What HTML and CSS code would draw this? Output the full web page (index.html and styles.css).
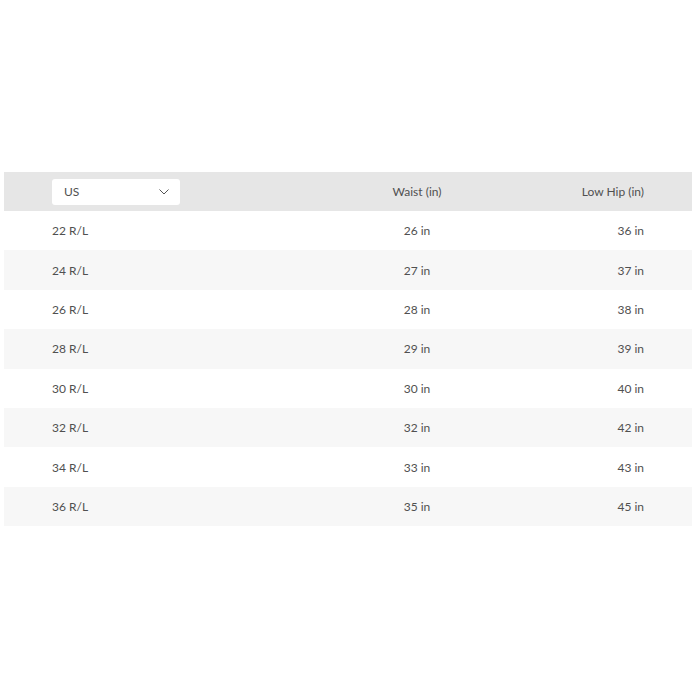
FILE: index.html
```html
<!DOCTYPE html>
<html>
<head>
<meta charset="utf-8">
<link rel="stylesheet" href="styles.css">
</head>
<body>
<div class="page">
  <div class="table">
    <div class="row head">
      <div class="c1">
        <div class="select">
          <span>US</span>
          <svg class="chev" width="10" height="6" viewBox="0 0 10 6"><path d="M0.5 0.5 L5 5 L9.5 0.5" fill="none" stroke="#555" stroke-width="1"/></svg>
        </div>
      </div>
      <div class="c2">Waist (in)</div>
      <div class="c3">Low Hip (in)</div>
    </div>
    <div class="row"><div class="c1">22 R/L</div><div class="c2">26 in</div><div class="c3">36 in</div></div>
    <div class="row alt"><div class="c1">24 R/L</div><div class="c2">27 in</div><div class="c3">37 in</div></div>
    <div class="row"><div class="c1">26 R/L</div><div class="c2">28 in</div><div class="c3">38 in</div></div>
    <div class="row alt"><div class="c1">28 R/L</div><div class="c2">29 in</div><div class="c3">39 in</div></div>
    <div class="row"><div class="c1">30 R/L</div><div class="c2">30 in</div><div class="c3">40 in</div></div>
    <div class="row alt"><div class="c1">32 R/L</div><div class="c2">32 in</div><div class="c3">42 in</div></div>
    <div class="row"><div class="c1">34 R/L</div><div class="c2">33 in</div><div class="c3">43 in</div></div>
    <div class="row alt"><div class="c1">36 R/L</div><div class="c2">35 in</div><div class="c3">45 in</div></div>
  </div>
</div>
</body>
</html>
```
FILE: styles.css
```css
html, body {
  margin: 0;
  padding: 0;
  background: #fff;
}
.page {
  width: 700px;
  height: 700px;
  padding: 172px 8px 0 4px;
  box-sizing: border-box;
  font-family: "Lato", "Open Sans", sans-serif;
  font-size: 12px;
  color: #505050;
}
.table {
  width: 688px;
}
.row {
  display: grid;
  grid-template-columns: 1fr 120px 167px;
  align-items: center;
  height: 39.4px;
  padding: 0 48px;
  box-sizing: border-box;
}
.row.head {
  height: 39px;
  background: #e6e6e6;
}
.row.alt {
  background: #f7f7f7;
}
.c2 {
  text-align: center;
}
.c3 {
  text-align: right;
}
.select {
  width: 128px;
  height: 26px;
  background: #fff;
  border-radius: 3px;
  display: flex;
  align-items: center;
  justify-content: space-between;
  padding: 0 11px 0 12px;
  box-sizing: border-box;
}
.chev {
  display: block;
}
```
